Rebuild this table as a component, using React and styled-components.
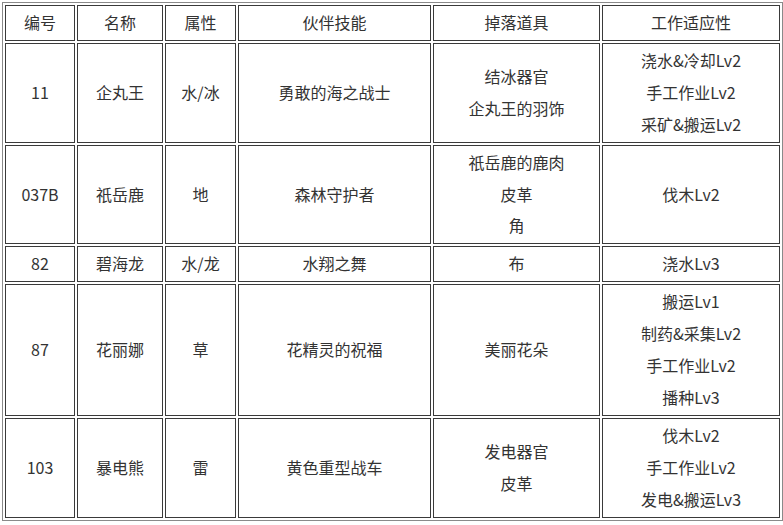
import styled, { createGlobalStyle } from "styled-components";

const GlobalStyle = createGlobalStyle`
    body {
        margin: 0;
        background: #fff;
        font-family: "Noto Sans CJK SC", "Noto Sans", sans-serif;
        color: #333;
    }
`;

const columns = [
    { title: "编号", width: 70 },
    { title: "名称", width: 86 },
    { title: "属性", width: 71 },
    { title: "伙伴技能", width: 193 },
    { title: "掉落道具", width: 167 },
    { title: "工作适应性", width: 178 },
];

const pals = [
    ["11", "企丸王", "水/冰", "勇敢的海之战士", ["结冰器官", "企丸王的羽饰"], ["浇水&冷却Lv2", "手工作业Lv2", "采矿&搬运Lv2"]],
    ["037B", "祇岳鹿", "地", "森林守护者", ["祇岳鹿的鹿肉", "皮革", "角"], ["伐木Lv2"]],
    ["82", "碧海龙", "水/龙", "水翔之舞", ["布"], ["浇水Lv3"]],
    ["87", "花丽娜", "草", "花精灵的祝福", ["美丽花朵"], ["搬运Lv1", "制药&采集Lv2", "手工作业Lv2", "播种Lv3"]],
    ["103", "暴电熊", "雷", "黄色重型战车", ["发电器官", "皮革"], ["伐木Lv2", "手工作业Lv2", "发电&搬运Lv3"]],
];

function App() {
    return (
        <>
            <GlobalStyle />
            <Table>
                <thead>
                    <tr>
                        {columns.map((col) => (
                            <HeadCell key={col.title} $width={col.width}>
                                {col.title}
                            </HeadCell>
                        ))}
                    </tr>
                </thead>
                <tbody>
                    {pals.map((row) => (
                        <tr key={row[0]}>
                            {row.map((value, i) => (
                                <Cell key={i}>
                                    {Array.isArray(value)
                                        ? value.map((line) => <Line key={line}>{line}</Line>)
                                        : value}
                                </Cell>
                            ))}
                        </tr>
                    ))}
                </tbody>
            </Table>
        </>
    );
}

export default App;

const Table = styled.table`
    box-sizing: border-box;
    width: 781px;
    margin: 2px 0 0 2px;
    table-layout: fixed;
    border-collapse: separate;
    border-spacing: 2px;
    border: 1px solid #8a8a8a;
    font-size: 16px;
    line-height: 31.9px;
`;

const Cell = styled.td`
    box-sizing: border-box;
    padding: 1px;
    border: 1px solid #3a3a3a;
    text-align: center;
    vertical-align: middle;
    color: #333;
`;

const HeadCell = styled(Cell).attrs({ as: "th" })`
    width: ${(p) => p.$width}px;
    font-weight: normal;
`;

const Line = styled.div`
    white-space: nowrap;
`;
